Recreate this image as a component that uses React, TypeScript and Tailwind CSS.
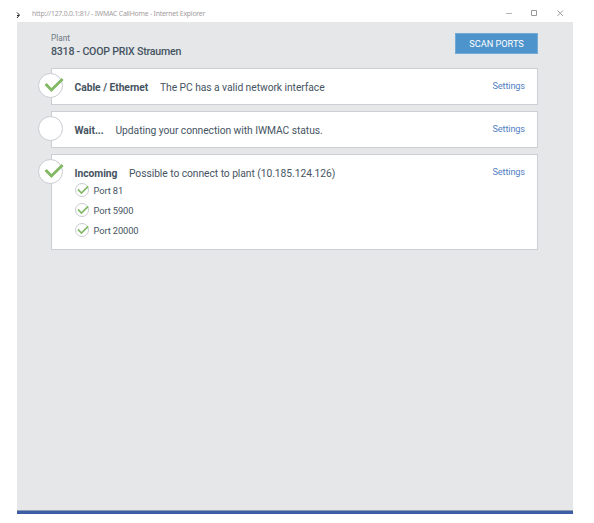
import type { ReactNode } from 'react';

function CheckMark({ className }: { className: string }) {
  return (
    <svg viewBox="0 0 20 16" className={className} fill="none" stroke="#82b966" strokeWidth="2.9">
      <path d="M1.6 7 7.4 13 18.6 2" />
    </svg>
  );
}

function StatusCircle({ done }: { done: boolean }) {
  return (
    <span className="absolute -left-[14px] top-[4px] flex h-[25px] w-[25px] items-center justify-center rounded-full border border-[#c9ccd3] bg-white">
      {done && <CheckMark className="relative left-[3px] -top-[1px] h-[16px] w-[20px] shrink-0" />}
    </span>
  );
}

function Card({
  title,
  titleWidth,
  message,
  done,
  className,
  children,
}: {
  title: string;
  titleWidth: string;
  message: string;
  done: boolean;
  className: string;
  children?: ReactNode;
}) {
  return (
    <section className={`relative border border-[#cdcfd4] bg-white pl-[22.5px] pr-3 pt-[13px] ${className}`}>
      <StatusCircle done={done} />
      <div className="flex h-3 items-center text-[10.3px] leading-3">
        <h2 className={`shrink-0 font-bold tracking-[-0.04px] ${titleWidth}`}>{title}</h2>
        <p className="grow tracking-[-0.06px]">{message}</p>
        <a className="relative -top-[1.6px] text-[9.2px] tracking-[-0.12px] text-[#5581c4]">Settings</a>
      </div>
      {children}
    </section>
  );
}

const ports = ['Port 81', 'Port 5900', 'Port 20000'];

export default function App() {
  return (
    <div className="relative h-[523px] w-[594px] overflow-hidden bg-white pl-[17px] font-['Roboto','Liberation_Sans',sans-serif] text-[#465462]">
      <svg className="absolute left-[16px] top-[12px] h-[7px] w-[5px]" viewBox="0 0 5 7" fill="none" stroke="#222" strokeWidth="1">
        <path d="M1 .5 3.5 3 1 6M1 3.5h2" />
      </svg>
      <div className="w-[556px]">
        <header className="flex h-[22px] items-center pl-[15px] pr-[9px] pt-[5px]">
          <span className="grow whitespace-nowrap font-['Noto_Sans',sans-serif] text-[6.9px] leading-3 tracking-[-0.22px] text-[#a39da0]">
            http://127.0.0.1:81/ - IWMAC CallHome - Internet Explorer
          </span>
          <svg className="relative -top-px h-[8px] w-[58px]" viewBox="0 0 58 8" fill="none" stroke="#999" strokeWidth="1">
            <path d="M0 4.5h6" stroke="#b5b5b5" />
            <path d="M25.5 1.5h5v5h-5z" />
            <path d="m51.5 1.5 5.5 5.5m0-5.5-5.5 5.5" strokeWidth=".9" />
          </svg>
        </header>
        <main className="h-[488px] bg-[#e5e7e9] pl-[34px] pr-[35px] pt-[11px]">
          <div className="flex h-[35px] items-start justify-between">
            <div>
              <div className="text-[8.3px] leading-[11px] text-[#707b86]">Plant</div>
              <h1 className="pt-px text-[10.6px] font-medium leading-[13px] tracking-[-0.22px]">8318 - COOP PRIX Straumen</h1>
            </div>
            <button className="h-[21px] w-[83px] border border-[#75a9d6] bg-[#4d94cc] text-[9.2px] leading-[19px] text-white">
              SCAN PORTS
            </button>
          </div>
          <div className="flex flex-col gap-1.5">
            <Card title="Cable / Ethernet" titleWidth="w-[85.5px]" message="The PC has a valid network interface" done className="h-[37px]" />
            <Card title="Wait..." titleWidth="w-[41px]" message="Updating your connection with IWMAC status." done={false} className="h-[37px]" />
            <Card title="Incoming" titleWidth="w-[54.5px]" message="Possible to connect to plant (10.185.124.126)" done className="h-[96px]">
              <ul>
                {ports.map((port) => (
                  <li key={port} className="flex h-5 items-center gap-[5px] text-[9.3px] tracking-[-0.1px]">
                    <span className="flex h-3.5 w-3.5 items-center justify-center rounded-full border border-[#c9ccd3] bg-white">
                      <CheckMark className="relative left-[1.5px] -top-[0.5px] h-[10px] w-[12px] shrink-0" />
                    </span>
                    <span className="relative top-px">{port}</span>
                  </li>
                ))}
              </ul>
            </Card>
          </div>
        </main>
        <footer className="h-1 border-t border-[#8f9bb0] bg-[#3b5ea6]" />
      </div>
    </div>
  );
}
